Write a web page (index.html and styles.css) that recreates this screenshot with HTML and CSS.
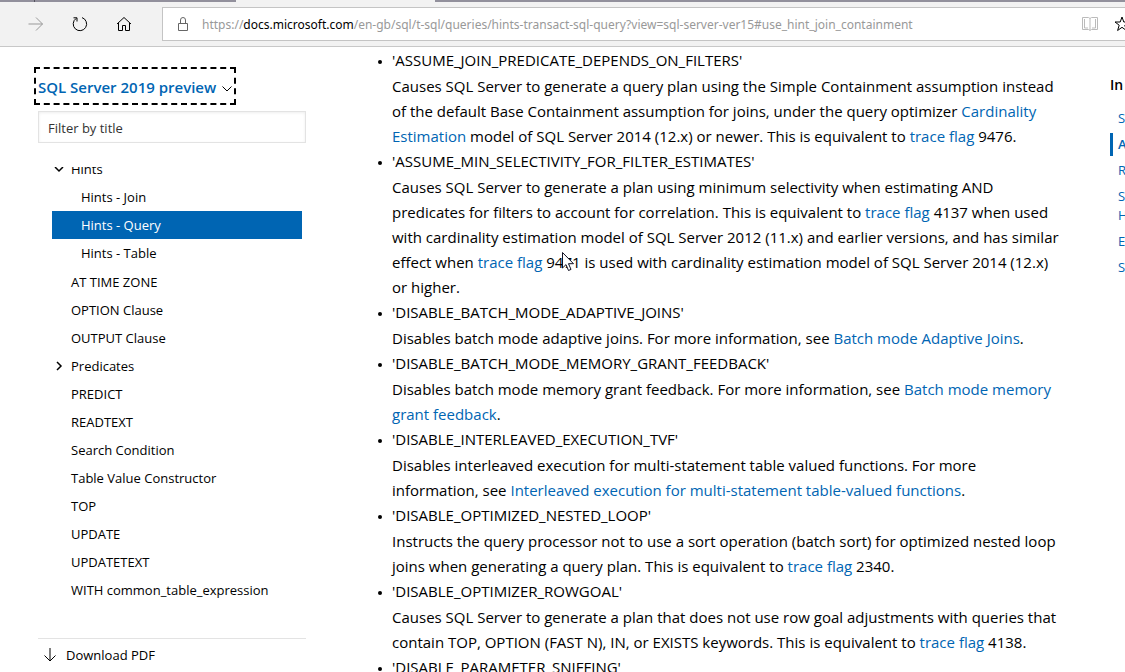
FILE: index.html
```
<!DOCTYPE html>
<html lang="en-gb">
<head>
    <meta charset="UTF-8">
    <title>Query Hints (Transact-SQL)</title>
    <link rel="stylesheet" href="styles.css">
</head>
<body>
<div class="tabs">
    <div class="tab tab-first"></div>
    <div class="tab tab-second"></div>
    <div class="tab tab-active"></div>
    <div class="tab tab-rest"></div>
</div>
<div class="toolbar">
    <button type="button" class="tool" disabled aria-label="Forward">
        <svg width="16" height="16" viewBox="0 0 16 16"><path d="M0.5 8h14M8 1.5L14.5 8L8 14.5"/></svg>
    </button>
    <button type="button" class="tool" aria-label="Refresh">
        <svg width="16" height="16" viewBox="0 0 16 16"><path d="M10 1.6A6.7 6.7 0 1 1 4.2 2.4M1.5 1.8H5V5.5"/></svg>
    </button>
    <button type="button" class="tool" aria-label="Home">
        <svg width="16" height="16" viewBox="0 0 16 16"><path d="M1 8L8 1.5L15 8M2.5 7V14.5H6.5V9.5H9.5V14.5H13.5V7"/></svg>
    </button>
    <div class="address">
        <svg class="lock" width="12" height="14" viewBox="0 0 12 14"><path d="M1.5 6.5h9v7h-9zM3.5 6.5V3a2.5 2.5 0 0 1 5 0V6.5"/></svg>
        <div class="url" role="textbox" contenteditable="true" spellcheck="false" aria-label="Address">https://<b>docs.microsoft.com</b>/en-gb/sql/t-sql/queries/hints-transact-sql-query?view=sql-server-ver15#use_hint_join_containment</div>
        <svg class="book" width="16" height="16" viewBox="0 0 16 16"><path d="M0.5 1.5H6.5L8 2.5L9.5 1.5H15.5V13.5H9.5L8 14.5L6.5 13.5H0.5zM8 2.5V14M2.5 3V12H6M13.5 3V12H10"/></svg>
        <svg class="star" width="16" height="16" viewBox="0 0 16 16"><path d="M8 1L9.8 6H15L10.8 9.2L12.4 14.5L8 11.3L3.6 14.5L5.2 9.2L1 6H6.2z"/></svg>
    </div>
</div>

<div class="page">
    <nav class="side">
        <div class="version">
            <select aria-label="Version">
                <option>SQL Server 2019 preview</option>
            </select>
            <svg width="10" height="6" viewBox="0 0 10 6"><path d="M0.5 0.5L5 5L9.5 0.5"/></svg>
        </div>
        <input type="text" class="filter" placeholder="Filter by title" aria-label="Filter by title">
        <div class="tree">
            <ul>
                <li>
                    <a href="#" class="parent"><svg width="10" height="10" viewBox="0 0 10 10"><path d="M1 3L5 7L9 3"/></svg>Hints</a>
                    <ul>
                        <li><a href="#">Hints - Join</a></li>
                        <li><a href="#" class="selected">Hints - Query</a></li>
                        <li><a href="#">Hints - Table</a></li>
                    </ul>
                </li>
                <li><a href="#">AT TIME ZONE</a></li>
                <li><a href="#">OPTION Clause</a></li>
                <li><a href="#">OUTPUT Clause</a></li>
                <li><a href="#" class="parent"><svg width="10" height="10" viewBox="0 0 10 10"><path d="M3 1L7 5L3 9"/></svg>Predicates</a></li>
                <li><a href="#">PREDICT</a></li>
                <li><a href="#">READTEXT</a></li>
                <li><a href="#">Search Condition</a></li>
                <li><a href="#">Table Value Constructor</a></li>
                <li><a href="#">TOP</a></li>
                <li><a href="#">UPDATE</a></li>
                <li><a href="#">UPDATETEXT</a></li>
                <li><a href="#">WITH common_table_expression</a></li>
            </ul>
        </div>
        <a href="#" class="download"><svg width="12" height="14" viewBox="0 0 12 14"><path d="M6 0V13M0.5 7.5L6 13L11.5 7.5"/></svg>Download PDF</a>
    </nav>

    <main class="content">
        <ul>
            <li>'ASSUME_JOIN_PREDICATE_DEPENDS_ON_FILTERS'
                <p>Causes SQL Server to generate a query plan using the Simple Containment assumption instead of the default Base Containment assumption for joins, under the query optimizer <a href="#">Cardinality Estimation</a> model of SQL Server 2014 (12.x) or newer. This is equivalent to <a href="#">trace flag</a> 9476.</p></li>
            <li>'ASSUME_MIN_SELECTIVITY_FOR_FILTER_ESTIMATES'
                <p>Causes SQL Server to generate a plan using minimum selectivity when estimating AND predicates for filters to account for correlation. This is equivalent to <a href="#">trace flag</a> 4137 when used with cardinality estimation model of SQL Server 2012 (11.x) and earlier versions, and has similar effect when <a href="#">trace flag</a> <span class="pointed">9471<svg class="cursor" width="12" height="20" viewBox="0 0 12 20"><path d="M0.5 0.5V16L4 12.6L6.5 18.5L9 17.4L6.5 11.7H11.5z"/></svg></span> is used with cardinality estimation model of SQL Server 2014 (12.x) or higher.</p></li>
            <li>'DISABLE_BATCH_MODE_ADAPTIVE_JOINS'
                <p>Disables batch mode adaptive joins. For more information, see <a href="#">Batch mode Adaptive Joins</a>.</p></li>
            <li>'DISABLE_BATCH_MODE_MEMORY_GRANT_FEEDBACK'
                <p>Disables batch mode memory grant feedback. For more information, see <a href="#">Batch mode memory grant feedback</a>.</p></li>
            <li>'DISABLE_INTERLEAVED_EXECUTION_TVF'
                <p>Disables interleaved execution for multi-statement table valued functions. For more information, see <a href="#">Interleaved execution for multi-statement table-valued functions</a>.</p></li>
            <li>'DISABLE_OPTIMIZED_NESTED_LOOP'
                <p>Instructs the query processor not to use a sort operation (batch sort) for optimized nested loop joins when generating a query plan. This is equivalent to <a href="#">trace flag</a> 2340.</p></li>
            <li>'DISABLE_OPTIMIZER_ROWGOAL'
                <p>Causes SQL Server to generate a plan that does not use row goal adjustments with queries that contain TOP, OPTION (FAST N), IN, or EXISTS keywords. This is equivalent to <a href="#">trace flag</a> 4138.</p></li>
            <li>'DISABLE_PARAMETER_SNIFFING'</li>
        </ul>
    </main>

    <aside class="toc">
        <h3>In</h3>
        <a href="#">S</a>
        <a href="#" class="current">A</a>
        <a href="#">R</a>
        <a href="#">S<br>H</a>
        <a href="#">E</a>
        <a href="#">S</a>
    </aside>
</div>
</body>
</html>
```
FILE: styles.css
```
*{
    box-sizing:border-box;
}
body{
    margin:0;
    height:100vh;
    display:flex;
    flex-direction:column;
    overflow:hidden;
    background:#fff;
    color:#000;
    font-family:"Open Sans","Noto Sans",sans-serif;
    font-size:15px;
}
ul{
    margin:0;
    padding:0;
    list-style:none;
}
a{
    color:#0065b3;
    text-decoration:none;
}
svg{
    flex:none;
    fill:none;
    stroke:currentColor;
}

/* browser chrome */
.tabs{
    display:flex;
    flex:none;
    height:2px;
    background:#f2f2f2;
}
.tab{
    background:#92909c;
}
.tab-first{
    width:34px;
}
.tab-second{
    width:202px;
    border-left:1px solid #55535e;
}
.tab-active{
    width:199px;
    background:#f2f2f2;
}
.tab-rest{
    flex:1;
}
.toolbar{
    display:flex;
    flex:none;
    align-items:center;
    height:45px;
    padding-left:14px;
    background:#f2f2f2;
    border-bottom:1px solid #c8c8c8;
}
.tool{
    display:flex;
    align-items:center;
    justify-content:center;
    width:44px;
    height:34px;
    padding:0;
    border:0;
    background:none;
    color:#000;
}
.tool:disabled{
    color:#999;
}
.address{
    display:flex;
    flex:1;
    align-items:center;
    height:34px;
    margin-left:16px;
    padding-left:14px;
    background:#fff;
    border:1px solid #c4c4c4;
    border-right:0;
    overflow:hidden;
}
.lock{
    color:#666;
}
.url{
    flex:1;
    padding-left:13px;
    color:#999;
    font-family:"Noto Sans",sans-serif;
    font-size:12px;
    white-space:nowrap;
}
.url b{
    color:#000;
    font-weight:normal;
}
.book{
    color:#bbb;
    margin-right:16px;
}
.star{
    margin-right:-5px;
    color:#000;
}

.page{
    display:flex;
    flex:1;
    min-height:0;
}

/* left navigation */
.side{
    display:flex;
    flex:none;
    flex-direction:column;
    width:306px;
    padding:20px 0 0 38px;
    font-size:13px;
}
.version{
    position:relative;
    flex:none;
    width:202px;
    height:38px;
    margin-left:-4px;
    border:2px dashed #000;
}
.version select{
    width:100%;
    height:100%;
    padding:2px 0 0 2px;
    border:0;
    outline:0;
    background:none;
    appearance:none;
    color:#0065b3;
    font:600 15px "Open Sans","Noto Sans",sans-serif;
}
.version svg{
    position:absolute;
    right:2px;
    top:17px;
}
.filter{
    flex:none;
    width:100%;
    height:32px;
    margin-top:6px;
    padding:2px 9px 0;
    border:1px solid #e3e3e3;
    box-shadow:inset 0 1px 3px #eee;
    font:13px "Open Sans","Noto Sans",sans-serif;
}
.filter::placeholder{
    color:#333;
    opacity:1;
}
.tree{
    flex:1;
    min-height:0;
    margin-top:24px;
    padding:0 4px 0 14px;
    overflow:hidden;
}
.tree > ul{
    margin-top:-12px;
}
.tree ul ul{
    padding-bottom:1px;
}
.tree a{
    display:flex;
    align-items:center;
    height:28px;
    padding-left:19px;
    color:#000;
}
.tree ul ul a{
    padding-left:29px;
}
.tree .parent{
    padding-left:2px;
    gap:7px;
}
.tree svg{
    stroke-width:1.5;
}
.tree .selected{
    background:#0065b3;
    color:#fff;
}
.download{
    display:flex;
    flex:none;
    align-items:center;
    gap:10px;
    height:34px;
    padding:0 0 2px 6px;
    border-top:1px solid #e3e3e3;
    color:#000;
}

/* article */
.content{
    flex:1;
    padding:1px 45px 0 86px;
    line-height:25px;
}
.content li{
    position:relative;
}
.content p{
    margin:1px 0 0;
}
.content li::before{
    content:"";
    position:absolute;
    left:-14px;
    top:12px;
    width:4px;
    height:4px;
    border-radius:50%;
    background:#000;
}
.pointed{
    position:relative;
}
.cursor{
    position:absolute;
    left:16px;
    top:0;
    fill:#fff;
    stroke:#112;
}

/* in this article */
.toc{
    flex:none;
    width:15px;
    padding-top:26px;
    font-size:13px;
    line-height:19px;
    white-space:nowrap;
}
.toc h3{
    margin:0 0 10px;
    font-size:14px;
    font-weight:600;
    line-height:24px;
}
.toc a{
    display:block;
    margin-bottom:3px;
    padding:2px 0 2px 5px;
    border-left:3px solid transparent;
}
.toc .current{
    border-color:#0065b3;
    font-weight:600;
}
```
